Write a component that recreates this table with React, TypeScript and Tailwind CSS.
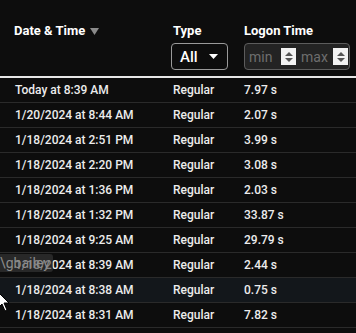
const rows = [
  ["Today at 8:39 AM", "Regular", "7.97 s"],
  ["1/20/2024 at 8:44 AM", "Regular", "2.07 s"],
  ["1/18/2024 at 2:51 PM", "Regular", "3.99 s"],
  ["1/18/2024 at 2:20 PM", "Regular", "3.08 s"],
  ["1/18/2024 at 1:36 PM", "Regular", "2.03 s"],
  ["1/18/2024 at 1:32 PM", "Regular", "33.87 s"],
  ["1/18/2024 at 9:25 AM", "Regular", "29.79 s"],
  ["1/18/2024 at 8:39 AM", "Regular", "2.44 s"],
  ["1/18/2024 at 8:38 AM", "Regular", "0.75 s"],
  ["1/18/2024 at 8:31 AM", "Regular", "7.82 s"],
];

function Spinner() {
  return (
    <span className="flex h-[17px] w-[15px] flex-col items-center justify-center gap-[2px] bg-[#f2f2f2]">
      <svg width="8" height="4" viewBox="0 0 8 4">
        <path d="M0 4 L4 0 L8 4 Z" fill="#555" />
      </svg>
      <svg width="8" height="4" viewBox="0 0 8 4">
        <path d="M0 0 L8 0 L4 4 Z" fill="#555" />
      </svg>
    </span>
  );
}

export default function App() {
  return (
    <div
      className="relative h-[333px] w-[356px] overflow-hidden bg-[#0d0d0d] text-[12px] text-[#ececec]"
      style={{ fontFamily: "Roboto, 'Liberation Sans', sans-serif" }}
    >
      <div className="grid grid-cols-[171px_73px_1fr] border-b-2 border-[#e6e6e6] pb-[6px] pt-[23px] text-[13px] font-bold leading-[16px] text-white">
        <div className="flex items-start gap-[5px] pl-[14px]">
          <span>Date &amp; Time</span>
          <svg width="9" height="8" viewBox="0 0 9 8" className="mt-[5px]">
            <path d="M0 0 L9 0 L4.5 7 Z" fill="#8a8a8a" />
          </svg>
        </div>
        <div className="flex flex-col">
          <span className="pl-[2px]">Type</span>
          <div className="mt-[4px] flex h-[27px] w-[57px] items-center justify-between rounded-[4px] border border-[#9a9a9a] pl-[8px] pr-[9px] text-[15px] font-medium">
            <span>All</span>
            <svg width="9" height="5" viewBox="0 0 9 5">
              <path d="M0 0 L9 0 L4.5 5 Z" fill="#fff" />
            </svg>
          </div>
        </div>
        <div className="flex flex-col">
          <span>Logon Time</span>
          <div className="mt-[4px] flex h-[27px] w-[106px] items-center overflow-hidden rounded-[4px] border border-[#5c5c5c] bg-[#232323] text-[14px] font-normal text-[#6e6e6e]">
            <div className="flex flex-1 items-center justify-between pl-[4px] pr-[1px]">
              <span>min</span>
              <Spinner />
            </div>
            <div className="flex flex-1 items-center justify-between pl-[4px] pr-[1px]">
              <span>max</span>
              <Spinner />
            </div>
          </div>
        </div>
      </div>
      {rows.map((r, i) => (
        <div
          key={i}
          className={`grid h-[25px] grid-cols-[172px_72px_1fr] items-center border-b border-[#2a2a2a] font-medium ${
            i === 8 ? "bg-[#13171b]" : ""
          }`}
        >
          <span className="pl-[15px]">{r[0]}</span>
          <span className="pl-[1px]">{r[1]}</span>
          <span>{r[2]}</span>
        </div>
      ))}
      <div className="absolute left-[-3px] top-[254px] rounded-[3px] bg-[#3a3a3a]/60 px-[3px] text-[14px] leading-[18px] text-[#8c8c8c]">
        \gbailey
      </div>
      <svg
        className="absolute left-[-3px] top-[291px]"
        width="14"
        height="22"
        viewBox="0 0 14 22"
      >
        <path
          d="M1 1 L1 17 L5 13 L8 20 L10 19 L7 12 L12 12 Z"
          fill="#fff"
          stroke="#000"
          strokeWidth="1"
        />
      </svg>
    </div>
  );
}
